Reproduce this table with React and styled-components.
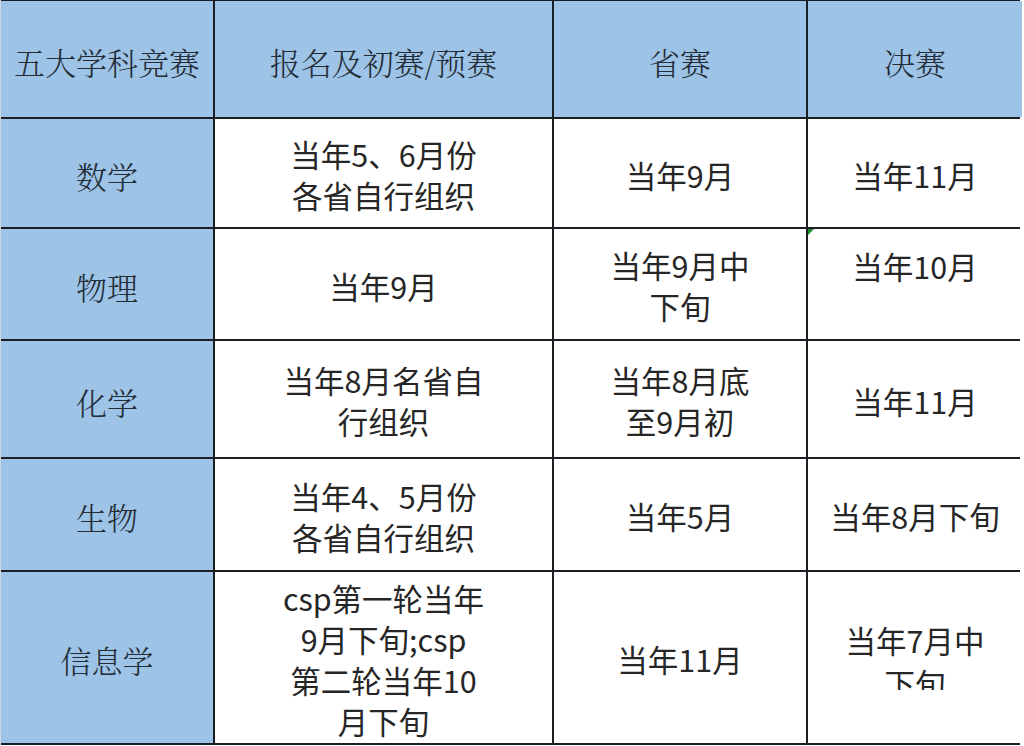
import styled, { createGlobalStyle, css } from "styled-components";

const GlobalStyle = createGlobalStyle`
  html, body {
    margin: 0;
    padding: 0;
    background: #fff;
  }
  body {
    font-family: "Noto Sans CJK SC", "Liberation Sans", sans-serif;
  }
`;

const Sheet = styled.div`
  display: grid;
  grid-template-columns: 212px 337px 252px 214px;
  grid-template-rows: 116px 108px 110px 116px 111px 171px;
  gap: 2px;
  width: 1017px;
  padding: 1px 2px 2px 0;
  background: #1b1f24;
  border-left: 1px solid #c9d6e2;
`;

const Cell = styled.div`
  position: relative;
  display: flex;
  flex-direction: column;
  align-items: center;
  justify-content: center;
  text-align: center;
  background: #fff;
  color: #262626;
  font-size: 30.5px;
  line-height: 41px;
  padding-top: 4px;
  box-sizing: border-box;
  overflow: hidden;

  ${(p) =>
    p.$head &&
    css`
      background: #9dc3e6;
      color: #232d38;
      font-family: "Noto Serif CJK SC", "Noto Sans CJK SC", "Liberation Serif", serif;
      font-weight: 300;
      font-size: 31px;
    `}

  ${(p) =>
    p.$top &&
    css`
      justify-content: flex-start;
      padding-top: 17px;
    `}

  ${(p) =>
    p.$clipped &&
    css`
      justify-content: flex-start;
      padding-top: 47px;
    `}
`;

const Line = styled.span`
  display: block;
  white-space: nowrap;
`;

const Clip = styled.div`
  height: 71px;
  line-height: 43px;
  overflow: hidden;
`;

const Marker = styled.span`
  position: absolute;
  top: 0;
  left: 0;
  width: 0;
  height: 0;
  border-top: 6px solid #1f8a2e;
  border-right: 6px solid transparent;
`;

const header = ["五大学科竞赛", "报名及初赛/预赛", "省赛", "决赛"];

const rows = [
  {
    subject: "数学",
    cells: [["当年5、6月份", "各省自行组织"], ["当年9月"], ["当年11月"]],
  },
  {
    subject: "物理",
    cells: [["当年9月"], ["当年9月中", "下旬"], ["当年10月"]],
    top: 2,
    marker: 2,
  },
  {
    subject: "化学",
    cells: [["当年8月名省自", "行组织"], ["当年8月底", "至9月初"], ["当年11月"]],
  },
  {
    subject: "生物",
    cells: [["当年4、5月份", "各省自行组织"], ["当年5月"], ["当年8月下旬"]],
  },
  {
    subject: "信息学",
    cells: [
      ["csp第一轮当年", "9月下旬;csp", "第二轮当年10", "月下旬"],
      ["当年11月"],
      ["当年7月中", "下旬"],
    ],
    clipped: 2,
  },
];

export default function App() {
  return (
    <>
      <GlobalStyle />
      <Sheet>
        {header.map((h) => (
          <Cell key={h} $head>
            <Line>{h}</Line>
          </Cell>
        ))}
        {rows.map((row) => [
          <Cell key={row.subject} $head>
            <Line>{row.subject}</Line>
          </Cell>,
          ...row.cells.map((lines, i) => {
            const content = lines.map((l) => <Line key={l}>{l}</Line>);
            return (
              <Cell
                key={row.subject + i}
                $top={row.top === i}
                $clipped={row.clipped === i}
              >
                {row.marker === i && <Marker />}
                {row.clipped === i ? <Clip>{content}</Clip> : content}
              </Cell>
            );
          }),
        ])}
      </Sheet>
    </>
  );
}
